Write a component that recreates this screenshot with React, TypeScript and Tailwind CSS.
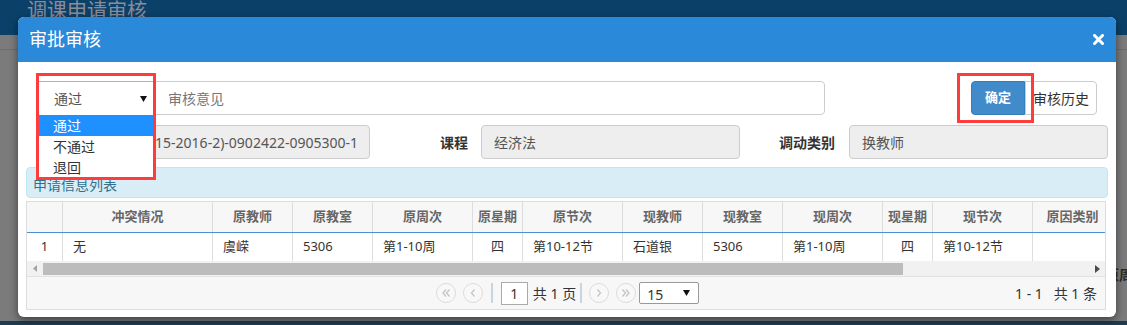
import React from "react";

const font = { fontFamily: '"Noto Sans", "Noto Sans CJK SC", sans-serif' };

const headers = ["", "冲突情况", "原教师", "原教室", "原周次", "原星期", "原节次", "现教师", "现教室", "现周次", "现星期", "现节次", "原因类别"];
const row = ["1", "无", "虞嵘", "5306", "第1-10周", "四", "第10-12节", "石道银", "5306", "第1-10周", "四", "第10-12节", ""];
const centered = [0, 5, 10];
const gridCols = "grid grid-cols-[36px_150px_80px_80px_100px_50px_100px_80px_80px_100px_50px_100px_80px]";

function Circle({ dir }: { dir: "first" | "prev" | "next" | "last" }) {
  const single = dir === "prev" || dir === "next";
  const left = dir === "first" || dir === "prev";
  return (
    <div className="w-[20px] h-[20px] rounded-full border border-[#dcdcdc] bg-[#f8f8f8] flex items-center justify-center">
      <svg width="10" height="10" viewBox="0 0 10 10" fill="none" stroke="#c4c4c4" strokeWidth="1.3">
        {left ? (
          single ? (
            <path d="M6.5 1.5 L3.5 5 L6.5 8.5" />
          ) : (
            <>
              <path d="M5 1.5 L2 5 L5 8.5" />
              <path d="M8.5 1.5 L5.5 5 L8.5 8.5" />
            </>
          )
        ) : single ? (
          <path d="M3.5 1.5 L6.5 5 L3.5 8.5" />
        ) : (
          <>
            <path d="M1.5 1.5 L4.5 5 L1.5 8.5" />
            <path d="M5 1.5 L8 5 L5 8.5" />
          </>
        )}
      </svg>
    </div>
  );
}

function Caret() {
  return (
    <svg width="7" height="6" viewBox="0 0 7 6">
      <path d="M0 0 L7 0 L3.5 6 Z" fill="#111" />
    </svg>
  );
}

export default function App() {
  return (
    <div className="w-[1127px] h-[325px] relative overflow-hidden bg-[#7b7b7b]" style={font}>
      {/* page behind */}
      <div className="flex flex-col h-full">
        <div className="h-[35px] bg-[#0b4169] pl-[27px] text-[20px] leading-[22px] text-[#8b8c98]">调课申请审核</div>
        <div className="flex-1 bg-[#7b7b7b] flex flex-col">
          <div className="h-[15px] border-b border-[#6e6e6e]" />
          <div className="flex-1 flex justify-end items-end pb-[36px]">
            <span className="text-[14px] font-bold text-[#2a2a2a] mr-[-6px]">原周</span>
          </div>
        </div>
        <div className="h-[4px] bg-[#1c3b55]" />
      </div>

      {/* modal */}
      <div className="absolute left-[18px] top-[17px] w-[1098px] h-[300px] bg-white rounded-[6px] overflow-hidden shadow-[0_3px_9px_rgba(0,0,0,0.5)]">
        <div className="h-[45px] bg-[#2b89da] flex items-center justify-between pl-[11px] pr-[12px]">
          <span className="text-white text-[18px]">审批审核</span>
          <svg width="11" height="11" viewBox="0 0 11 11" stroke="white" strokeWidth="3" strokeLinecap="square">
            <path d="M1.5 1.5 L9.5 9.5 M9.5 1.5 L1.5 9.5" />
          </svg>
        </div>

        <div className="px-[8px] pt-[19px]">
          {/* row 1 */}
          <div className="flex justify-between h-[34px]">
            <div className="flex pl-[12px]">
              <div className="w-[115px] h-[34px] border-t border-l border-[#8fbbe6] flex items-center justify-between pl-[15px] pr-[6px] text-[14px] text-[#555]">
                <span>通过</span>
                <Caret />
              </div>
              <div className="w-[672px] h-[34px] border border-[#ccc] rounded-r-[4px] flex items-center pl-[14px] text-[14px] text-[#777]">
                审核意见
              </div>
            </div>
            <div className="flex mr-[11px]">
              <div className="w-[54px] h-[34px] bg-[#428bca] border border-[#357ebd] rounded-l-[4px] flex items-center justify-center text-white text-[13px] font-bold">
                确定
              </div>
              <div className="w-[72px] h-[34px] border border-[#ccc] rounded-r-[4px] flex items-center justify-center text-[14px] text-[#333]">
                审核历史
              </div>
            </div>
          </div>

          {/* row 2 */}
          <div className="flex mt-[10px] h-[34px] items-center">
            <div className="w-[72px]" />
            <div className="ml-[13px] w-[259px] h-[34px] bg-[#eee] border border-[#ccc] rounded-[4px] flex items-center justify-end pr-[11px] overflow-hidden text-[14px] text-[#555] whitespace-nowrap">
              (2015-2016-2)-0902422-0905300-1
            </div>
            <div className="w-[98px] text-right text-[14px] font-bold text-[#333]">课程</div>
            <div className="ml-[13px] w-[259px] h-[34px] bg-[#eee] border border-[#ccc] rounded-[4px] flex items-center pl-[12px] text-[14px] text-[#555]">
              经济法
            </div>
            <div className="w-[95px] text-right text-[14px] font-bold text-[#333]">调动类别</div>
            <div className="ml-[14px] w-[259px] h-[34px] bg-[#eee] border border-[#ccc] rounded-[4px] flex items-center pl-[12px] text-[14px] text-[#555]">
              换教师
            </div>
          </div>

          {/* info panel */}
          <div className="mt-[8px] h-[31px] bg-[#d9edf7] border border-[#bce8f1] rounded-[4px] pl-[6px] pt-[9px] text-[14px] leading-[16px] text-[#31708f]">
            申请信息列表
          </div>

          {/* table */}
          <div className="mt-[3px] w-[1080px] h-[109px] border border-[#ddd] flex flex-col">
            <div className="overflow-hidden">
              <div className={`${gridCols} w-[1086px] h-[31px] bg-[#f7f7f7] border-b border-[#4a8fd0]`}>
                {headers.map((h, i) => (
                  <div key={i} className="border-r border-[#ddd] flex items-center justify-center text-[13px] font-bold text-[#666] whitespace-nowrap">
                    {h}
                  </div>
                ))}
              </div>
              <div className={`${gridCols} w-[1086px] h-[28px] bg-white`}>
                {row.map((c, i) => (
                  <div
                    key={i}
                    className={`border-r border-[#ddd] flex items-center text-[13px] text-[#333] whitespace-nowrap ${
                      centered.includes(i) ? "justify-center" : "pl-[10px]"
                    }`}
                  >
                    {c}
                  </div>
                ))}
              </div>
            </div>
            {/* scrollbar */}
            <div className="h-[16px] bg-[#f1f1f1] flex items-center border-b border-[#e2e2e2]">
              <div className="w-[16px] flex justify-center">
                <svg width="5" height="7" viewBox="0 0 5 7">
                  <path d="M4 0 L0 3.5 L4 7 Z" fill="#a3a3a3" />
                </svg>
              </div>
              <div className="w-[860px] h-[12px] bg-[#bcbcbc]" />
              <div className="flex-1" />
              <div className="w-[16px] flex justify-center">
                <svg width="5" height="8" viewBox="0 0 5 8">
                  <path d="M0 0 L5 4 L0 8 Z" fill="#4a4a4a" />
                </svg>
              </div>
            </div>
            {/* pagination */}
            <div className="flex-1 bg-[#f7f7f7] relative flex items-center justify-center">
              <div className="flex items-center ml-[3px]">
                <Circle dir="first" />
                <div className="ml-[7px]"><Circle dir="prev" /></div>
                <div className="ml-[8px] w-[2px] h-[20px] bg-[#c5d5e2]" />
                <div className="ml-[8px] w-[27px] h-[23px] border border-[#aaa] bg-white flex items-end justify-center pb-[1px] text-[14px] text-[#333] leading-[18px]">1</div>
                <div className="ml-[5px] text-[14px] text-[#333] whitespace-pre">共 1 页</div>
                <div className="ml-[4px] w-[2px] h-[20px] bg-[#c5d5e2]" />
                <div className="ml-[7px]"><Circle dir="next" /></div>
                <div className="ml-[7px]"><Circle dir="last" /></div>
                <div className="ml-[3px] w-[60px] h-[22px] border border-[#999] rounded-[2px] bg-white flex items-center justify-between pl-[7px] pr-[8px] text-[14px] text-[#333]">
                  <span className="mt-[3px]">15</span>
                  <Caret />
                </div>
              </div>
              <div className="absolute right-[8px] top-0 h-full flex items-center text-[14px] text-[#333] whitespace-pre">
                1 - 1   共 1 条
              </div>
            </div>
          </div>
        </div>

        {/* dropdown list */}
        <div className="absolute left-[20px] top-[98px] w-[115px] bg-white border-b border-[#ccc] text-[14px] text-[#333]">
          <div className="h-[21px] bg-[#1e90ff] text-white pl-[15px] flex items-center">通过</div>
          <div className="h-[21px] pl-[15px] flex items-center">不通过</div>
          <div className="h-[21px] pl-[15px] flex items-center">退回</div>
        </div>

        {/* highlight boxes */}
        <div className="absolute left-[18px] top-[56px] w-[120px] h-[107px] border-[3px] border-[#ff3b3b]" />
        <div className="absolute left-[939px] top-[56px] w-[77px] h-[50px] border-[3px] border-[#ff3b3b]" />
      </div>
    </div>
  );
}
